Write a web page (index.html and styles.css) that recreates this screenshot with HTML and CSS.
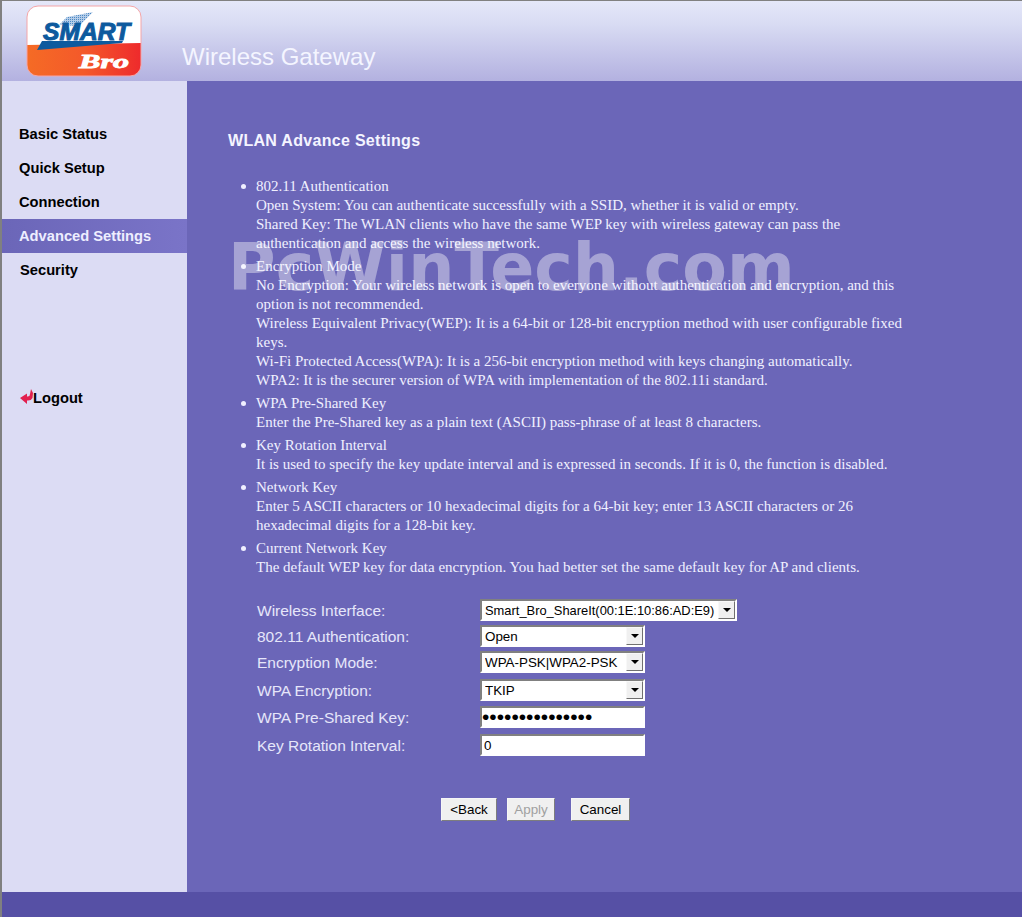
FILE: index.html
```html
<!DOCTYPE html>
<html lang="en">
<head>
<meta charset="utf-8">
<title>Wireless Gateway</title>
<link rel="stylesheet" href="styles.css">
</head>
<body>
<div class="page">
  <header class="header">
    <svg class="logo" viewBox="0 0 116 72" width="116" height="72" aria-label="Smart Bro logo">
      <defs>
        <linearGradient id="red" x1="0" x2="1" y1="0" y2="0">
          <stop offset="0" stop-color="#f56b25"/>
          <stop offset="0.5" stop-color="#f4592a"/>
          <stop offset="1" stop-color="#ee2a2c"/>
        </linearGradient>
        <pattern id="hatch" width="2" height="2" patternUnits="userSpaceOnUse">
          <rect width="2" height="2" fill="#b4cce8"/>
          <rect width="1" height="1" fill="#4d8ac4"/>
        </pattern>
        <clipPath id="rounded"><rect x="1" y="1" width="114" height="70" rx="11"/></clipPath>
      </defs>
      <g clip-path="url(#rounded)">
        <rect x="1" y="1" width="114" height="70" fill="#fff"/>
        <path d="M1 40L115 38V71H1Z" fill="url(#red)"/>
      </g>
      <rect x="1" y="1" width="114" height="70" rx="11" fill="none" stroke="#f4a5a8" stroke-width="1"/>
      <path d="M33 20 L41 12 L67 7 L53 21Z" fill="url(#hatch)"/>
      <path d="M16 36 L97 36 L96 38 L11 45 Z" fill="#0d5a9e"/>
      <text class="logo-smart" x="17" y="35" textLength="87" lengthAdjust="spacingAndGlyphs">SMART</text>
      <text class="logo-bro" x="53" y="63" textLength="50" lengthAdjust="spacingAndGlyphs">Bro</text>
    </svg>
    <div class="brand">Wireless Gateway</div>
  </header>
  <div class="middle">
    <nav class="sidebar">
      <a class="nav-item">Basic Status</a>
      <a class="nav-item">Quick Setup</a>
      <a class="nav-item">Connection</a>
      <a class="nav-item active">Advanced Settings</a>
      <a class="nav-item nudge">Security</a>
      <a class="nav-item logout">
        <svg class="logout-icon" viewBox="0 0 13 16" width="13" height="16" aria-hidden="true">
          <path d="M11 0 L13 4 L12.5 9 Q11 12 7 11.5 L7 15 L0 9 L7 4.5 L7 7.5 Q10 8 10 5Z" fill="#e2204f"/>
        </svg><span>Logout</span>
      </a>
    </nav>
    <main class="content">
      <h1 class="title">WLAN Advance Settings</h1>
      <ul class="help">
        <li>802.11 Authentication<br>Open System: You can authenticate successfully with a SSID, whether it is valid or empty.<br>Shared Key: The WLAN clients who have the same WEP key with wireless gateway can pass the authentication and access the wireless network.</li>
        <li>Encryption Mode<br>No Encryption: Your wireless network is open to everyone without authentication and encryption, and this option is not recommended.<br>Wireless Equivalent Privacy(WEP): It is a 64-bit or 128-bit encryption method with user configurable fixed keys.<br>Wi-Fi Protected Access(WPA): It is a 256-bit encryption method with keys changing automatically.<br>WPA2: It is the securer version of WPA with implementation of the 802.11i standard.</li>
        <li>WPA Pre-Shared Key<br>Enter the Pre-Shared key as a plain text (ASCII) pass-phrase of at least 8 characters.</li>
        <li>Key Rotation Interval<br>It is used to specify the key update interval and is expressed in seconds. If it is 0, the function is disabled.</li>
        <li>Network Key<br>Enter 5 ASCII characters or 10 hexadecimal digits for a 64-bit key; enter 13 ASCII characters or 26 hexadecimal digits for a 128-bit key.</li>
        <li>Current Network Key<br>The default WEP key for data encryption. You had better set the same default key for AP and clients.</li>
      </ul>
      <form class="form">
        <label class="field-label">Wireless Interface:</label>
        <span class="select-wrap wide"><select class="select"><option>Smart_Bro_ShareIt(00:1E:10:86:AD:E9)</option></select><i class="arrow"></i></span>
        <label class="field-label">802.11 Authentication:</label>
        <span class="select-wrap"><select class="select"><option>Open</option></select><i class="arrow"></i></span>
        <label class="field-label">Encryption Mode:</label>
        <span class="select-wrap"><select class="select"><option>WPA-PSK|WPA2-PSK</option></select><i class="arrow"></i></span>
        <label class="field-label">WPA Encryption:</label>
        <span class="select-wrap"><select class="select"><option>TKIP</option></select><i class="arrow"></i></span>
        <label class="field-label">WPA Pre-Shared Key:</label>
        <input class="text-input password" type="password" value="123456789012345">
        <label class="field-label">Key Rotation Interval:</label>
        <input class="text-input" type="text" value="0">
      </form>
      <div class="buttons">
        <button class="btn back" type="button">&lt;Back</button>
        <button class="btn apply" type="button" disabled>Apply</button>
        <button class="btn cancel" type="button">Cancel</button>
      </div>
    </main>
  </div>
  <footer class="footer"></footer>
  <div class="watermark">PcWinTech.com</div>
</div>
</body>
</html>
```
FILE: styles.css
```css
* { box-sizing: border-box; }
html, body { margin: 0; padding: 0; }
body { background: #6b66b8; overflow: hidden; }
.page {
  position: relative;
  width: 1022px;
  height: 917px;
  display: flex;
  flex-direction: column;
  border-left: 2px solid #808080;
  border-top: 1px solid #808080;
  overflow: hidden;
}
.header {
  height: 80px;
  flex: none;
  display: flex;
  align-items: flex-start;
  padding: 4px 0 0 24px;
  background: linear-gradient(#e4e7f9 0%, #d8dbf3 30%, #b3b1e0 100%);
}
.logo { flex: none; display: block; }
.logo-smart {
  font: italic bold 24px "Liberation Sans", sans-serif;
  fill: #0d5a9e;
  stroke: #0d5a9e;
  stroke-width: 1px;
}
.logo-bro {
  font: italic bold 19px "Liberation Serif", serif;
  fill: #fff;
  stroke: #fff;
  stroke-width: 0.8px;
}
.brand {
  margin: 38px 0 0 40px;
  font: 24px/28px "Liberation Sans", sans-serif;
  color: #f4f5ff;
}
.middle { flex: 1; display: flex; min-height: 0; }
.sidebar {
  width: 185px;
  flex: none;
  padding-top: 36px;
  background: #dcdcf4;
  display: flex;
  flex-direction: column;
}
.nav-item {
  height: 34px;
  padding-left: 17px;
  font: bold 14.7px/34px "Liberation Sans", sans-serif;
  color: #000;
}
.nav-item.nudge { padding-left: 18px; }
.nav-item.active {
  color: #eeeeff;
  background: linear-gradient(90deg, #6b66b8, #7a74c8);
}
.nav-item.logout {
  margin-top: 93px;
  padding-left: 18px;
  display: flex;
  align-items: center;
  padding-top: 1px;
}
.logout-icon { flex: none; margin-top: -2px; }
.content {
  flex: 1;
  padding: 0 0 0 41px;
  background: #6b66b8;
  min-width: 0;
}
.title {
  margin: 49px 0 0;
  font: bold 16px/22px "Liberation Sans", sans-serif;
  letter-spacing: 0.3px;
  color: #f4f4ff;
}
.help {
  width: 674px;
  margin: 25px 0 0;
  padding: 0 0 0 28px;
  list-style: none;
  font: 15px/19px "Liberation Serif", serif;
  color: #f0f0ff;
}
.help li { position: relative; margin-bottom: 4px; }
.help li::before {
  content: "";
  position: absolute;
  left: -15px;
  top: 7px;
  width: 5px;
  height: 5px;
  border-radius: 50%;
  background: #f0f0ff;
}
.form {
  margin: 22px 0 0 29px;
  display: grid;
  grid-template-columns: 223px auto;
  grid-template-rows: 26px 26px 28px 27px 28px 22px;
  justify-items: start;
}
.field-label {
  font: 15.5px/24px "Liberation Sans", sans-serif;
  color: #e6e6fa;
}
.select-wrap {
  position: relative;
  display: block;
  width: 165px;
  height: 22px;
}
.select-wrap.wide { width: 257px; }
.select {
  appearance: none;
  display: block;
  width: 100%;
  height: 22px;
  padding: 0 0 0 3px;
  border: 2px solid;
  border-color: #808080 #fff #fff #808080;
  border-radius: 0;
  background: #fff;
  font: 13.4px "Liberation Sans", sans-serif;
  color: #000;
}
.select-wrap.wide .select { font-size: 12.9px; }
.arrow {
  position: absolute;
  top: 2px;
  right: 2px;
  width: 17px;
  height: 18px;
  background: #f0f0f0;
  border: 1px solid;
  border-color: #f8f8f8 #707070 #707070 #f8f8f8;
  pointer-events: none;
}
.arrow::after {
  content: "";
  position: absolute;
  left: 4px;
  top: 6px;
  border: 4px solid transparent;
  border-top: 4px solid #000;
  border-bottom: 0;
}
.text-input {
  display: block;
  width: 165px;
  height: 22px;
  padding: 0 2px;
  border: 2px solid;
  border-color: #808080 #fff #fff #808080;
  background: #fff;
  font: 13.4px "Liberation Sans", sans-serif;
  color: #000;
  outline: none;
  border-radius: 0;
}
.text-input.password { font-size: 21px; padding: 0; }
.buttons {
  display: flex;
  margin: 42px 0 0 213px;
}
.btn {
  height: 23px;
  padding: 0;
  border: 1px solid;
  border-color: #f6f6f6 #7d7d7d #7d7d7d #f6f6f6;
  border-radius: 0;
  background: #f0f0f0;
  font: 13.4px "Liberation Sans", sans-serif;
  color: #000;
}
.btn.back { width: 56px; }
.btn.apply { width: 48px; margin-left: 10px; color: #a0a0a0; }
.btn.cancel { width: 59px; margin-left: 16px; }
.footer { height: 25px; flex: none; background: #5650a5; }
.watermark {
  position: absolute;
  left: 226px;
  top: 229px;
  font: bold 65px/76px "DejaVu Sans", sans-serif;
  color: rgba(255, 255, 255, 0.4);
  white-space: nowrap;
  pointer-events: none;
}
```
